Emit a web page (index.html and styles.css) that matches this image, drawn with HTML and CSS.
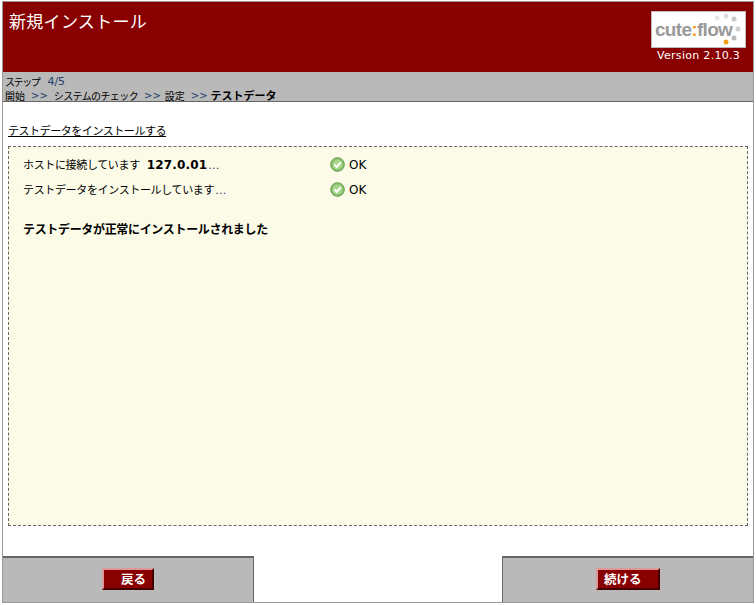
FILE: index.html
```html
<!DOCTYPE html>
<html lang="ja">
<head>
<meta charset="utf-8">
<title>新規インストール</title>
<link rel="stylesheet" href="styles.css">
</head>
<body>
<div class="frame">
  <header class="head">
    <h1 class="title">新規インストール</h1>
    <div class="brand">
      <div class="logo">
        <span class="logo-text">cute<span class="colon">:</span>flow</span>
        <svg class="dots" width="34" height="36" viewBox="0 0 34 36" aria-hidden="true">
          <circle cx="6" cy="6" r="2.5" fill="#e6e6e6"/>
          <circle cx="15" cy="4" r="2.5" fill="#dcdcdc"/>
          <circle cx="23" cy="7" r="2.5" fill="#c8c8c8"/>
          <circle cx="27" cy="17" r="2.5" fill="#d0d0d0"/>
          <circle cx="23" cy="26" r="2.5" fill="#b8b8b8"/>
          <circle cx="15" cy="30" r="2.5" fill="#f0a01e"/>
        </svg>
      </div>
      <div class="version">Version 2.10.3</div>
    </div>
  </header>
  <nav class="steps">
    <div class="step"><span class="step-label">ステップ</span><span class="num">4/5</span></div>
    <div class="crumbs"><span>開始</span><span class="sep">&gt;&gt;</span><span class="crumb-long">システムのチェック</span><span class="sep">&gt;&gt;</span><span class="crumb-short">設定</span><span class="sep">&gt;&gt;</span><b class="current">テストデータ</b></div>
  </nav>
  <main class="main">
    <h2 class="section">テストデータをインストールする</h2>
    <div class="box">
      <div class="row">
        <span class="label">ホストに接続しています<b class="host">127.0.01</b><span class="dots-text">...</span></span>
        <span class="status">
          <svg class="ok" width="15" height="15" viewBox="0 0 15 15" aria-hidden="true"><circle cx="7.5" cy="7.5" r="6.8" fill="#8cc26c" stroke="#64994f"/><circle cx="7.5" cy="7.5" r="4.8" fill="#a8d68c"/><path d="M4.4 7.5 6.7 9.9 10.8 5.2" fill="none" stroke="#fff" stroke-width="2"/></svg>
          OK</span>
      </div>
      <div class="row">
        <span class="label">テストデータをインストールしています<span class="dots-text">...</span></span>
        <span class="status">
          <svg class="ok" width="15" height="15" viewBox="0 0 15 15" aria-hidden="true"><circle cx="7.5" cy="7.5" r="6.8" fill="#8cc26c" stroke="#64994f"/><circle cx="7.5" cy="7.5" r="4.8" fill="#a8d68c"/><path d="M4.4 7.5 6.7 9.9 10.8 5.2" fill="none" stroke="#fff" stroke-width="2"/></svg>
          OK</span>
      </div>
      <p class="done">テストデータが正常にインストールされました</p>
    </div>
  </main>
  <footer class="foot">
    <div class="foot-cell left"><button class="btn back" type="button">戻る</button></div>
    <div class="foot-cell right"><button class="btn next" type="button">続ける</button></div>
  </footer>
</div>
</body>
</html>
```

FILE: styles.css
```css
html, body { margin: 0; padding: 0; background: #fff; }
body { font-family: "DejaVu Sans", "Noto Sans CJK JP", sans-serif; font-size: 12px; color: #000; }
.frame {
  box-sizing: border-box;
  width: 752px;
  height: 602px;
  margin: 1px 2px 0;
  border: 1px solid #999;
  display: flex;
  flex-direction: column;
}
.head {
  height: 70px;
  background: #880000;
  display: flex;
  justify-content: space-between;
  flex: none;
}
.title {
  margin: 7px 0 0 6px;
  font-family: "Noto Sans CJK JP", sans-serif;
  font-size: 17px;
  line-height: 24px;
  letter-spacing: 0.3px;
  font-weight: 400;
  color: #fff;
}
.brand { width: 102px; display: flex; flex-direction: column; align-items: flex-start; padding-top: 9px; box-sizing: border-box; }
.logo {
  box-sizing: border-box;
  width: 95px;
  height: 37px;
  background: #fff;
  border: 1px solid #bbb;
  position: relative;
  overflow: hidden;
}
.logo-text {
  display: block;
  margin: 7px 0 0 3px;
  font-family: "Liberation Sans", sans-serif;
  font-weight: 700;
  font-size: 19px;
  line-height: 22px;
  letter-spacing: -0.7px;
  color: #999;
}
.colon { color: #f0a01e; }
.dots { position: absolute; right: 0; top: 0; }
.version { margin: 1px 0 0 6px; font-size: 11px; line-height: 14px; letter-spacing: 0.3px; color: #fff; white-space: nowrap; }
.steps {
  height: 30px;
  flex: none;
  box-sizing: border-box;
  background: #b9b9b9;
  border-bottom: 1px solid #666;
  padding: 3px 0 0 2px;
  font-family: "Noto Sans CJK JP", sans-serif;
  font-size: 10px;
  line-height: 13px;
}
.step { display: flex; gap: 8px; white-space: nowrap; }
.step-label { letter-spacing: -1.4px; }
.crumbs { display: flex; gap: 6px; margin-top: 2px; line-height: 11px; white-space: nowrap; }
.crumb-long { letter-spacing: -0.6px; }
.crumb-short { margin-left: -2px; }
.current { font-size: 11px; margin-left: -3px; }
.num { font-family: "DejaVu Sans", sans-serif; color: #23406e; font-size: 11px; }
.sep { font-family: "DejaVu Sans", sans-serif; color: #23406e; font-size: 10px; }
.main { flex: 1; min-height: 0; padding: 20px 5px 0 5px; display: flex; flex-direction: column; }
.section {
  margin: 0 0 7px;
  font-family: "Noto Sans CJK JP", sans-serif;
  font-size: 11px;
  line-height: 17px;
  letter-spacing: -0.45px;
  font-weight: 400;
  text-decoration: underline;
}
.box {
  box-sizing: border-box;
  height: 380px;
  background: #fcfbe8;
  border: 1px dashed #666;
  padding: 5px 14px;
}
.row { display: flex; height: 25px; align-items: center; font-family: "Noto Sans CJK JP", sans-serif; font-size: 11px; }
.label { width: 307px; flex: none; padding-bottom: 2px; letter-spacing: -0.35px; }
.host { margin-left: 7px; font-family: "DejaVu Sans", sans-serif; font-size: 12px; font-weight: 700; letter-spacing: 0.15px; }
.dots-text { margin-left: 1px; font-family: "DejaVu Sans", sans-serif; font-weight: 400; color: #23406e; letter-spacing: 0.3px; }
.status { display: flex; align-items: center; gap: 4px; font-family: "DejaVu Sans", sans-serif; font-size: 12px; }
.done { margin: 18px 0 0; font-family: "Noto Sans CJK JP", sans-serif; font-size: 12px; line-height: 18px; letter-spacing: -0.33px; font-weight: 700; }
.foot { flex: none; height: 46px; display: flex; justify-content: space-between; }
.foot-cell {
  box-sizing: border-box;
  background: #b9b9b9;
  border-top: 2px solid #666;
  display: flex;
  align-items: flex-start;
}
.left { width: 251px; border-right: 1px solid #666; padding: 10px 0 0 99px; }
.right { width: 251px; border-left: 1px solid #666; padding: 10px 0 0 93px; }
.btn {
  box-sizing: border-box;
  height: 22px;
  padding: 0;
  background: #880000;
  color: #fff;
  border: 2px solid;
  border-color: #d99 #400 #400 #d99;
  font-family: "Noto Sans CJK JP", sans-serif;
  font-size: 12.5px;
  font-weight: 700;
  line-height: 16px;
}
.back { width: 52px; text-align: right; padding-right: 6px; }
.next { width: 64px; text-align: left; padding-left: 6px; }
```
